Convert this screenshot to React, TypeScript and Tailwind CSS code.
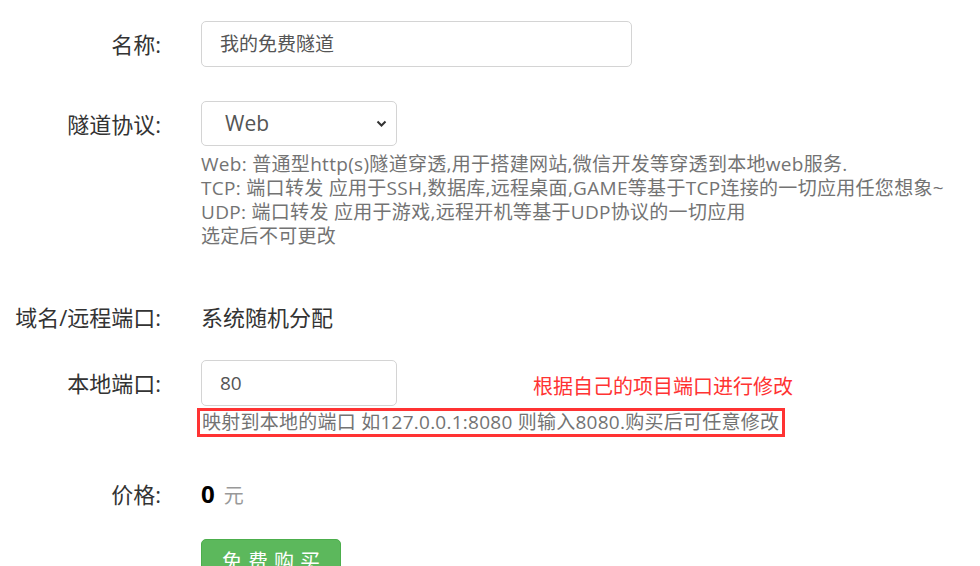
import React from "react";

const font = { fontFamily: '"Open Sans", "Noto Sans CJK SC", sans-serif' };

const Label = ({ text }: { text: string }) => (
  <div className="w-[161px] shrink-0 text-right text-[22px] leading-[46px] text-[#333]">
    {text}
  </div>
);

const App = () => {
  return (
    <div
      className="w-[980px] h-[566px] overflow-hidden bg-white"
      style={font}
    >
      <div className="flex flex-col pt-[21px]">
        {/* 名称 */}
        <div className="flex items-start">
          <Label text="名称:" />
          <div className="ml-10 w-[431px] h-[46px] rounded-[5px] border border-[#d4d4d4] px-[18px] text-[19px] leading-[44px] text-[#555]">
            我的免费隧道
          </div>
        </div>

        {/* 隧道协议 */}
        <div className="flex items-start mt-[34px]">
          <Label text="隧道协议:" />
          <div className="ml-10 flex flex-col">
            <div className="relative w-[196px] h-[45px] rounded-[5px] border border-[#d4d4d4] pl-[23px] text-[21px] leading-[43px] text-[#555]">
              Web
              <svg
                className="absolute right-[9px] top-[18px]"
                width="11"
                height="8"
                viewBox="0 0 11 8"
              >
                <path
                  d="M1.5 1.5 L5.5 5.5 L9.5 1.5"
                  fill="none"
                  stroke="#333"
                  strokeWidth="2"
                />
              </svg>
            </div>
            <div className="mt-[6px] text-[19px] leading-[24px] tracking-[0.3px] text-[#737373] whitespace-nowrap">
              <div>Web: 普通型http(s)隧道穿透,用于搭建网站,微信开发等穿透到本地web服务.</div>
              <div>TCP: 端口转发 应用于SSH,数据库,远程桌面,GAME等基于TCP连接的一切应用任您想象~</div>
              <div>UDP: 端口转发 应用于游戏,远程开机等基于UDP协议的一切应用</div>
              <div>选定后不可更改</div>
            </div>
          </div>
        </div>

        {/* 域名/远程端口 */}
        <div className="flex items-start mt-[46px]">
          <Label text="域名/远程端口:" />
          <div className="ml-10 text-[22px] leading-[46px] text-[#333]">系统随机分配</div>
        </div>

        {/* 本地端口 */}
        <div className="flex items-start mt-[20px]">
          <Label text="本地端口:" />
          <div className="relative ml-10 flex flex-col">
            <div className="w-[196px] h-[46px] rounded-[5px] border border-[#d4d4d4] px-[18px] text-[19px] leading-[44px] text-[#555]">
              80
            </div>
            <div className="-ml-1 mt-[2px] w-[588px] h-[29px] border-[3px] border-[#ff3333] pl-[2px] text-[19px] leading-[23px] tracking-[0.25px] text-[#737373] whitespace-nowrap">
              映射到本地的端口 如127.0.0.1:8080 则输入8080.购买后可任意修改
            </div>
            <div className="absolute left-[332px] top-[15px] text-[20px] leading-[24px] text-[#ff3333] whitespace-nowrap">
              根据自己的项目端口进行修改
            </div>
          </div>
        </div>

        {/* 价格 */}
        <div className="flex items-start mt-[34px]">
          <Label text="价格:" />
          <div className="ml-10 flex items-baseline leading-[46px]">
            <span className="text-[24px] font-bold text-black">0</span>
            <span className="ml-[9px] text-[20px] text-[#999]">元</span>
          </div>
        </div>

        {/* 按钮 */}
        <div className="flex mt-[20px]">
          <div className="w-[161px] shrink-0" />
          <button className="ml-10 w-[140px] h-[46px] rounded-[5px] bg-[#5cb85c] border border-[#4cae4c] text-white text-[20px] tracking-[6px] pl-[6px]">
            免费购买
          </button>
        </div>
      </div>
    </div>
  );
};

export default App;
